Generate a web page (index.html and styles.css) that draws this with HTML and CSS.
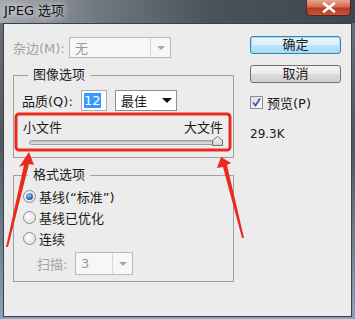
FILE: index.html
```html
<!DOCTYPE html>
<html lang="zh-CN">
<head>
    <meta charset="UTF-8">
    <title>JPEG 选项</title>
    <link rel="stylesheet" href="styles.css">
</head>
<body>
<div class="window">
    <!-- barra de título -->
    <div class="titlebar">
        <span class="title">JPEG 选项</span>
        <span class="close">
            <svg width="14" height="11" viewBox="0 0 14 11"><path d="M2 1.5 L12 9.5 M12 1.5 L2 9.5" stroke="#fff" stroke-width="2.6" stroke-linecap="round"/></svg>
        </span>
    </div>

    <div class="client">
        <div class="left">
            <div class="row matte">
                <span class="label disabled">杂边(M):</span>
                <div class="select off matte-sel"><span class="val">无</span><span class="drop"><i class="arrow"></i></span></div>
            </div>

            <fieldset class="group image">
                <legend>图像选项</legend>
                <div class="group-body">
                    <div class="row quality">
                        <span class="label">品质(Q):</span>
                        <span class="num"><span class="hl">12</span></span>
                        <div class="select q-sel"><span class="val">最佳</span><span class="drop plain"><i class="arrow dark"></i></span></div>
                    </div>
                    <div class="slider-labels"><span>小文件</span><span>大文件</span></div>
                    <div class="slider">
                        <div class="track"></div>
                        <svg class="thumb" width="11" height="10" viewBox="0 0 11 10">
                            <defs><linearGradient id="tg" x1="0" y1="0" x2="0" y2="1"><stop offset="0" stop-color="#fbfbfb"/><stop offset="1" stop-color="#cfcfcf"/></linearGradient></defs>
                            <polygon points="0.5,4.5 5.5,0.5 10.5,4.5 10.5,9.5 0.5,9.5" fill="url(#tg)" stroke="#6f6f6f"/>
                        </svg>
                    </div>
                </div>
            </fieldset>

            <fieldset class="group format">
                <legend>格式选项</legend>
                <div class="group-body">
                    <div class="radio-row"><span class="radio on"></span>基线(“标准”)</div>
                    <div class="radio-row"><span class="radio"></span>基线已优化</div>
                    <div class="radio-row"><span class="radio"></span>连续</div>
                    <div class="row scan">
                        <span class="label disabled">扫描:</span>
                        <div class="select off scan-sel"><span class="val">3</span><span class="drop"><i class="arrow"></i></span></div>
                    </div>
                </div>
            </fieldset>
        </div>

        <div class="right">
            <div class="btn default">确定</div>
            <div class="btn">取消</div>
            <div class="check-row">
                <svg class="check" width="13" height="13" viewBox="0 0 13 13">
                    <defs><linearGradient id="cg" x1="0" y1="0" x2="1" y2="1"><stop offset="0" stop-color="#dcdcdc"/><stop offset="1" stop-color="#fdfdfd"/></linearGradient></defs>
                    <rect x="0.5" y="0.5" width="12" height="12" fill="url(#cg)" stroke="#8e8f8f"/>
                    <path d="M3 6.5 L5.5 9.5 L10 2.5" fill="none" stroke="#3a62a8" stroke-width="1.8"/>
                </svg>
                <span>预览(P)</span>
            </div>
            <div class="size">29.3K</div>
        </div>
    </div>

    <!-- marcações vermelhas por cima do diálogo -->
    <svg class="marks" width="355" height="319" viewBox="0 0 355 319">
        <rect x="16" y="114" width="214" height="36" rx="3" fill="none" stroke="#ea2a1f" stroke-width="3"/>
        <polygon points="29,152 34,165 29,164 8,247 6,247 24,165 19,167" fill="#ea2a1f"/>
        <polygon points="221,157 231,163 227,165 244,238 242,238 223,167 217,168" fill="#ea2a1f"/>
    </svg>
</div>
</body>
</html>
```

FILE: styles.css
```css
/* janela */
body {
    margin: 0;
    overflow: hidden;
    font-family: "DejaVu Sans", "Noto Sans CJK SC", sans-serif;
    font-size: 12px;
    color: #1b1b1b;
}
.window {
    position: relative;
    width: 355px;
    height: 319px;
    background: linear-gradient(180deg, #6d747b 0%, #4f565d 45%, #8aa2bc 100%);
}
.titlebar {
    height: 23px;
    display: flex;
    align-items: flex-start;
    justify-content: space-between;
    background: linear-gradient(90deg, #a4a9ae 0%, #70777e 28%, #4a5159 60%, #3f464e 100%);
}
.title {
    margin: 3px 0 0 4px;
    font-size: 13px;
    line-height: 16px;
    color: #111;
    text-shadow: 0 0 6px #e8e8e8, 0 0 10px #d8d8d8;
}
.close {
    width: 45px;
    height: 16px;
    margin-right: 4px;
    display: flex;
    align-items: center;
    justify-content: center;
    box-sizing: border-box;
    border: 1px solid #5b2419;
    border-top: 0;
    border-radius: 0 0 5px 5px;
    background: linear-gradient(180deg, #e7a595 0%, #d26a52 45%, #b83a1f 55%, #c8533a 100%);
}

/* área cliente */
.client {
    box-sizing: border-box;
    width: 349px;
    height: 294px;
    margin-left: 3px;
    border: 1px solid #3b4046;
    background: #ececec;
    padding: 13px 0 0 9px;
    display: flex;
}
.left {
    width: 221px;
}
.right {
    margin: -1px 0 0 16px;
    width: 91px;
}

.row {
    display: flex;
    align-items: center;
}
.label {
    font-size: 13px;
    white-space: nowrap;
}
.disabled {
    color: #a2a2a2;
}
.matte {
    height: 21px;
}
.matte .label {
    width: 56px;
}

/* caixas de seleção */
.select {
    box-sizing: border-box;
    height: 21px;
    display: flex;
    align-items: center;
    border: 1px solid #a9a9a9;
    background: #fff;
    font-size: 13px;
}
.select .val {
    flex: 1;
    padding-left: 5px;
}
.select .drop {
    width: 19px;
    height: 100%;
    display: flex;
    align-items: center;
    justify-content: center;
    border-left: 1px solid #d8d8d8;
}
.select .drop.plain {
    border-left: 0;
}
.select.off {
    border-color: #b9b9b9;
    background: #f7f7f7;
    color: #9a9a9a;
}
.arrow {
    width: 0;
    height: 0;
    border-left: 4px solid transparent;
    border-right: 4px solid transparent;
    border-top: 4px solid #a8a8a8;
}
.arrow.dark {
    border-left-width: 5px;
    border-right-width: 5px;
    border-top: 5px solid #111;
}
.matte-sel {
    width: 102px;
}

/* grupos */
.group {
    margin: 9px 0 0;
    padding: 0;
    border: 1px solid #a0a0a0;
    min-width: 0;
}
.group legend {
    margin-left: 14px;
    padding: 0 5px;
    font-size: 13px;
    line-height: 16px;
}
.group-body {
    padding: 7px 10px 11px 8px;
}

.quality {
    height: 21px;
}
.quality .label {
    width: 59px;
}
.num {
    box-sizing: border-box;
    width: 26px;
    height: 21px;
    border: 1px solid #abadb3;
    background: #fff;
    display: flex;
    align-items: center;
    padding-left: 2px;
    font-size: 13px;
}
.hl {
    background: #3399ff;
    color: #fff;
    line-height: 15px;
}
.q-sel {
    width: 62px;
    margin-left: 8px;
    border-color: #8f8f8f;
}

.slider-labels {
    margin-top: 9px;
    display: flex;
    justify-content: space-between;
    padding-left: 1px;
    font-size: 13px;
    line-height: 16px;
}
.slider {
    position: relative;
    height: 10px;
}
.track {
    box-sizing: border-box;
    position: absolute;
    left: 7px;
    right: 0;
    top: 4px;
    height: 5px;
    border: 1px solid #9d9d9d;
    border-radius: 3px;
    background: linear-gradient(180deg, #bdbdbd, #e2e2e2);
}
.thumb {
    position: absolute;
    right: 0;
    top: 0;
}

.format .group-body {
    padding: 3px 10px 6px 9px;
}
.radio-row {
    height: 21px;
    display: flex;
    align-items: center;
    gap: 3px;
    font-size: 13px;
}
.radio {
    box-sizing: border-box;
    width: 13px;
    height: 13px;
    border-radius: 50%;
    border: 1px solid #8d8e8f;
    background: radial-gradient(circle at 40% 35%, #fff 0%, #e4e4e4 70%, #d0d0d0 100%);
    display: flex;
    align-items: center;
    justify-content: center;
}
.radio.on::after {
    content: "";
    width: 7px;
    height: 7px;
    border-radius: 50%;
    background: radial-gradient(circle at 40% 35%, #9bd0f5 0%, #2a6fb4 55%, #18457c 100%);
}
.scan {
    margin-top: 3px;
    height: 23px;
}
.scan .label {
    width: 52px;
    padding-left: 14px;
    box-sizing: border-box;
}
.scan-sel {
    width: 58px;
    height: 23px;
}

/* botões */
.btn {
    box-sizing: border-box;
    height: 18px;
    border: 1px solid #707070;
    border-radius: 3px;
    background: linear-gradient(180deg, #f3f3f3 0%, #ebebeb 50%, #dcdcdc 51%, #cfcfcf 100%);
    font-size: 13px;
    line-height: 16px;
    text-align: center;
    margin-bottom: 11px;
}
.btn.default {
    border-color: #3c7fb1;
    background: linear-gradient(180deg, #eaf6fd 0%, #d9f0fc 50%, #bee6fd 51%, #a7d9f5 100%);
    box-shadow: inset 0 0 0 1px #9ce0f8;
}
.check-row {
    margin-top: 1px;
    display: flex;
    align-items: center;
    gap: 4px;
    height: 16px;
    font-size: 13px;
}
.size {
    margin-top: 16px;
    line-height: 16px;
    font-size: 12px;
}

/* marcações */
.marks {
    position: absolute;
    left: 0;
    top: 0;
}
```
